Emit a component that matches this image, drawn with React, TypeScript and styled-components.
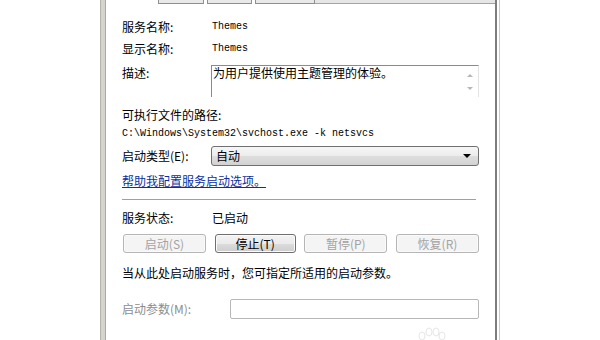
import React from "react";
import styled, { createGlobalStyle } from "styled-components";

const Global = createGlobalStyle`
  html, body { margin: 0; padding: 0; background: #ffffff; }
  body { width: 600px; height: 340px; overflow: hidden; }
`;

const cjk = `"Noto Sans CJK SC", "Microsoft YaHei", sans-serif`;
const mono = `"Liberation Mono", "DejaVu Sans Mono", monospace`;

const Page = styled.div`
  width: 600px;
  height: 340px;
  background: #ffffff;
  display: flex;
  font-family: ${cjk};
  font-size: 12px;
  color: #000;
  position: relative;
  overflow: hidden;
`;

const Frame = styled.div`
  margin-left: 100px;
  width: 400px;
  height: 340px;
  display: flex;
`;

const LeftBar = styled.div`
  width: 4px;
  background: #d4d3cc;
  border-left: 1px solid #b4b3ad;
  border-right: 1px solid #a9a8a2;
`;

const RightEdge = styled.div`
  width: 2px;
  background: #ffffff;
  border-right: 1px solid #c9c9c9;
`;

const Panel = styled.div`
  flex: 1;
  background: #ffffff;
  border-right: 2px solid #7d7d7d;
  display: flex;
  flex-direction: column;
`;

const TabStrip = styled.div`
  height: 4px;
  display: flex;
  padding-left: 52px;
`;

const Tab = styled.div<{ $w: number }>`
  width: ${(p) => p.$w}px;
  margin-right: 3px;
  height: 3px;
  background: #e9e9e9;
  border: 1px solid #8e8f8f;
  border-top: none;
`;

const TabFiller = styled.div`
  flex: 1;
  height: 3px;
  background: #e6e6e6;
  border-bottom: 1px solid #a3a3a3;
  margin-left: -3px;
`;

const Content = styled.div`
  padding: 15px 16px 0 16px;
  display: flex;
  flex-direction: column;
`;

const Row = styled.div<{ $mt?: number; $label?: number; $center?: boolean }>`
  display: grid;
  grid-template-columns: ${(p) => p.$label ?? 90}px 1fr;
  align-items: ${(p) => (p.$center ? "center" : "start")};
  margin-top: ${(p) => p.$mt ?? 0}px;
  line-height: 16px;
`;

const Label = styled.span<{ $muted?: boolean }>`
  color: ${(p) => (p.$muted ? "#8d8d8d" : "#000")};
  white-space: nowrap;
`;

const Mono = styled.span`
  font-family: ${mono};
  font-size: 10px;
  line-height: 16px;
  white-space: nowrap;
`;

const Line = styled.div<{ $mt?: number }>`
  margin-top: ${(p) => p.$mt ?? 0}px;
  line-height: 16px;
  white-space: nowrap;
`;

const TextArea = styled.div`
  height: 32px;
  border-top: 1px solid #8a8a8a;
  border-left: 1px solid #8a8a8a;
  border-right: 1px solid #e3e3e3;
  display: flex;
  box-sizing: border-box;
  margin-left: -1px;
`;

const TextBody = styled.div`
  flex: 1;
  padding-left: 1px;
  line-height: 14px;
`;

const ScrollBar = styled.div`
  width: 17px;
  display: flex;
  flex-direction: column;
  align-items: center;
  justify-content: space-around;
  padding: 3px 0 2px;
  box-sizing: border-box;
`;

const Arrow = styled.span<{ $down?: boolean }>`
  width: 0;
  height: 0;
  border-left: 3px solid transparent;
  border-right: 3px solid transparent;
  ${(p) =>
    p.$down
      ? "border-top: 3px solid #b7b7b7;"
      : "border-bottom: 3px solid #b7b7b7;"}
`;

const Select = styled.div`
  height: 20px;
  box-sizing: border-box;
  margin-left: -1px;
  border: 1px solid #707070;
  border-radius: 3px;
  background: linear-gradient(#f6f6f6 0%, #ececec 50%, #dedede 51%, #d2d2d2 100%);
  display: flex;
  align-items: center;
  justify-content: space-between;
  padding: 0 7px 0 3px;
  line-height: 16px;
`;

const SelectValue = styled.span`
  border: 1px dotted transparent;
`;

const DropArrow = styled.span`
  width: 0;
  height: 0;
  border-left: 4px solid transparent;
  border-right: 4px solid transparent;
  border-top: 4px solid #000;
`;

const Link = styled.a`
  color: #0c2f9c;
  text-decoration: underline;
  text-underline-offset: 1px;
  cursor: pointer;
`;

const Separator = styled.div`
  margin-top: 10px;
  margin-right: 3px;
  height: 1px;
  background: #a0a0a0;
`;

const ButtonRow = styled.div`
  margin-top: 8px;
  display: grid;
  grid-template-columns: 83px 81px 83px 83px;
  column-gap: 8px;
  justify-content: space-between;
  padding-left: 1px;
`;

const Button = styled.button<{ $enabled?: boolean }>`
  height: 19px;
  box-sizing: border-box;
  padding: 0;
  font-family: ${cjk};
  font-size: 12px;
  line-height: 15px;
  border-radius: 3px;
  border: 1px solid ${(p) => (p.$enabled ? "#6f6f6f" : "#b5b5b5")};
  color: ${(p) => (p.$enabled ? "#000" : "#a3a3a3")};
  background: ${(p) =>
    p.$enabled
      ? "linear-gradient(#f3f3f3 0%, #ebebeb 50%, #dcdcdc 51%, #cdcdcd 100%)"
      : "#f4f4f4"};
  box-shadow: inset 0 0 0 1px ${(p) => (p.$enabled ? "#fbfbfb" : "#fafafa")};
`;

const Input = styled.div`
  height: 20px;
  box-sizing: border-box;
  border: 1px solid #b7b7b7;
  border-radius: 2px;
  background: #fff;
`;

const Watermark = styled.svg`
  position: absolute;
  left: 378px;
  top: 326px;
  width: 70px;
  height: 16px;
`;

export default function App() {
  return (
    <Page>
      <Global />
      <Frame>
        <LeftBar />
        <Panel>
          <TabStrip>
            <Tab $w={44} />
            <Tab $w={43} />
            <Tab $w={58} />
            <TabFiller />
          </TabStrip>
          <Content>
            <Row>
              <Label>服务名称:</Label>
              <Mono>Themes</Mono>
            </Row>
            <Row $mt={6}>
              <Label>显示名称:</Label>
              <Mono>Themes</Mono>
            </Row>
            <Row $mt={8}>
              <Label>描述:</Label>
              <TextArea>
                <TextBody>为用户提供使用主题管理的体验。</TextBody>
                <ScrollBar>
                  <Arrow />
                  <Arrow $down />
                </ScrollBar>
              </TextArea>
            </Row>
            <Line $mt={10}>可执行文件的路径:</Line>
            <Line>
              <Mono>C:\Windows\System32\svchost.exe -k netsvcs</Mono>
            </Line>
            <Row $mt={4} $center>
              <Label>启动类型(E):</Label>
              <Select>
                <SelectValue>自动</SelectValue>
                <DropArrow />
              </Select>
            </Row>
            <Line $mt={7}>
              <Link>帮助我配置服务启动选项。</Link>
            </Line>
            <Separator />
            <Row $mt={10}>
              <Label>服务状态:</Label>
              <span>已启动</span>
            </Row>
            <ButtonRow>
              <Button>启动(S)</Button>
              <Button $enabled>停止(T)</Button>
              <Button>暂停(P)</Button>
              <Button>恢复(R)</Button>
            </ButtonRow>
            <Line $mt={12}>当从此处启动服务时，您可指定所适用的启动参数。</Line>
            <Row $mt={18} $center $label={108}>
              <Label $muted>启动参数(M):</Label>
              <Input />
            </Row>
          </Content>
        </Panel>
        <RightEdge />
      </Frame>
      <Watermark viewBox="0 0 70 16">
        <g fill="none" stroke="#e6e6e6" strokeWidth="1">
          <ellipse cx="44" cy="10" rx="3" ry="4" />
          <ellipse cx="51" cy="6" rx="3" ry="4" />
          <ellipse cx="58" cy="6" rx="3" ry="4" />
          <ellipse cx="64" cy="10" rx="3" ry="4" />
        </g>
      </Watermark>
    </Page>
  );
}
